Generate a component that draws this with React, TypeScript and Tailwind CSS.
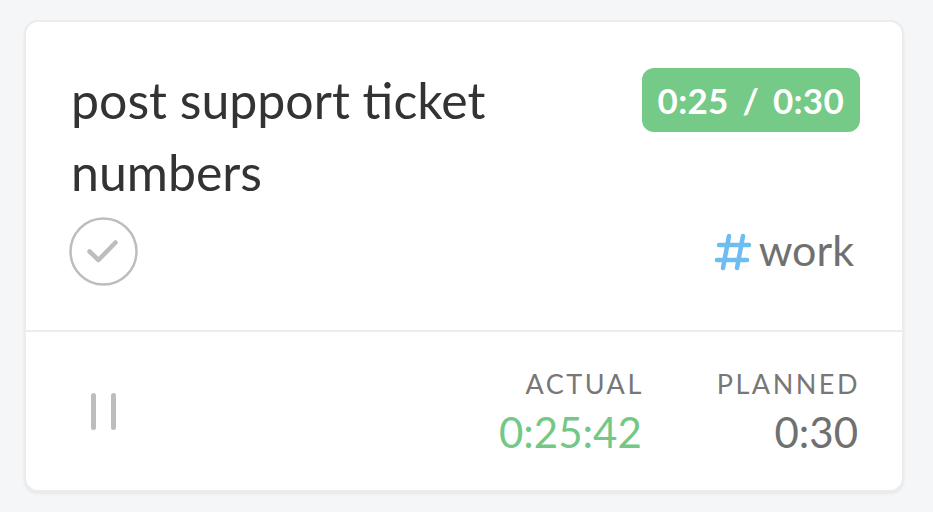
function CheckCircle() {
  return (
    <svg width="71" height="71" viewBox="0 0 71 71" fill="none">
      <circle cx="35.5" cy="35.5" r="33" stroke="#bdbdbd" strokeWidth="2.5" />
      <path d="M21.5 35.5 L30.5 44 L47.5 26.5" stroke="#bdbdbd" strokeWidth="4.5" strokeLinecap="round" strokeLinejoin="round" />
    </svg>
  );
}

function HashIcon() {
  return (
    <svg width="38" height="38" viewBox="0 0 38 38" fill="none">
      <g stroke="#6dbdf2" strokeWidth="4.5" strokeLinecap="round">
        <path d="M15 3 L9 35" />
        <path d="M29 3 L23 35" />
        <path d="M5 12 L35 12" />
        <path d="M3 27 L33 27" />
      </g>
    </svg>
  );
}

function PauseIcon() {
  return (
    <div className="flex gap-[15px]">
      <span className="block w-[5px] h-[37px] rounded-full bg-[#bdbdbd]" />
      <span className="block w-[5px] h-[37px] rounded-full bg-[#bdbdbd]" />
    </div>
  );
}

export default function App() {
  return (
    <div
      className="w-[933px] h-[512px] bg-[#f5f6f8] pt-[20px] pl-[24px]"
      style={{ fontFamily: 'Lato, "Open Sans", sans-serif' }}
    >
      <div className="w-[880px] h-[472px] bg-white rounded-[14px] border-2 border-[#ececec] shadow-[0_2px_3px_rgba(0,0,0,0.06)] flex flex-col">
        <div className="h-[310px] border-b-2 border-[#ececec] pl-[45px] pr-[42px] pt-[42px]">
          <div className="flex justify-between items-start">
            <div className="text-[50px] leading-[72px] text-[#333] w-[480px]">
              post support ticket numbers
            </div>
            <div className="mt-[4px] h-[64px] px-[16px] rounded-[12px] bg-[#74ca86] text-white font-bold text-[35px] flex items-center tracking-[0.3px] [word-spacing:5px]">
              0:25 / 0:30
            </div>
          </div>
          <div className="mt-[8px] flex justify-between items-center">
            <div className="ml-[-3px]">
              <CheckCircle />
            </div>
            <div className="flex items-center mr-[6px]">
              <HashIcon />
              <span className="ml-[7px] text-[43px] leading-none text-[#707070] pb-[4px]">work</span>
            </div>
          </div>
        </div>
        <div className="flex-1 flex items-center pl-[65px] pr-[44px]">
          <PauseIcon />
          <div className="ml-auto flex gap-[75px]">
            <div className="flex flex-col items-end">
              <span className="text-[27px] tracking-[2.5px] text-[#777] leading-[36px] mr-[-2px]">ACTUAL</span>
              <span className="text-[42px] text-[#74c886] leading-[48px] mt-[6px]">0:25:42</span>
            </div>
            <div className="flex flex-col items-end">
              <span className="text-[27px] tracking-[2.5px] text-[#777] leading-[36px] mr-[-2px]">PLANNED</span>
              <span className="text-[42px] text-[#707070] leading-[48px] mt-[6px]">0:30</span>
            </div>
          </div>
        </div>
      </div>
    </div>
  );
}
